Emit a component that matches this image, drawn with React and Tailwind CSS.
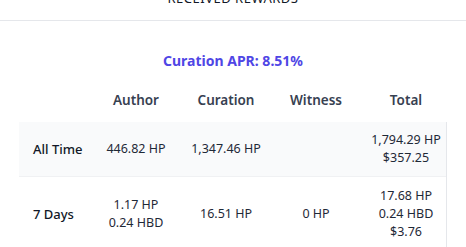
import React from "react";

const COLS = ["Author", "Curation", "Witness", "Total"];

const ROWS = [
  {
    label: "All Time",
    cells: [["446.82 HP"], ["1,347.46 HP"], [], ["1,794.29 HP", "$357.25"]],
    shaded: true,
  },
  {
    label: "7 Days",
    cells: [["1.17 HP", "0.24 HBD"], ["16.51 HP"], ["0 HP"], ["17.68 HP", "0.24 HBD", "$3.76"]],
    shaded: false,
  },
];

const App = () => {
  return (
    <div className="w-[466px] h-[247px] overflow-hidden bg-white font-['Noto_Sans',sans-serif] text-[#1f2937]">
      {/* 잘린 헤더 */}
      <div className="h-[21px] border-b border-[#e5e7eb] flex justify-center">
        <span className="block -mt-[9px] text-[13px] leading-[14px] tracking-[0.5px] text-[#111827]">
          RECEIVED REWARDS
        </span>
      </div>

      {/* APR */}
      <div className="mt-[30px] text-center text-[14px] leading-5 font-bold text-[#4f46e5]">
        Curation APR: 8.51%
      </div>

      {/* 테이블 */}
      <div className="mx-[19px] mt-[19px]">
        <div className="grid grid-cols-[72px_90px_90px_90px_90px] pb-3 text-[13.5px] leading-5 font-semibold text-[#374151]">
          <div />
          {COLS.map((c) => (
            <div key={c} className="text-center">{c}</div>
          ))}
        </div>

        <div className="border-r border-[#e5e7eb]">
          {ROWS.map((row) => (
            <div
              key={row.label}
              className={`grid grid-cols-[72px_90px_90px_90px_90px] items-center text-[12.5px] leading-[18px] border-b border-[#f0f1f3] ${
                row.shaded ? "bg-[#f9fafb] h-[55px]" : "bg-white h-[74px]"
              }`}
            >
              <div className="pl-[14px] text-[13px] font-medium text-[#111827]">{row.label}</div>
              {row.cells.map((lines, i) => (
                <div key={i} className="text-center">
                  {lines.map((l) => (
                    <div key={l}>{l}</div>
                  ))}
                </div>
              ))}
            </div>
          ))}
        </div>
      </div>
    </div>
  );
};

export default App;
